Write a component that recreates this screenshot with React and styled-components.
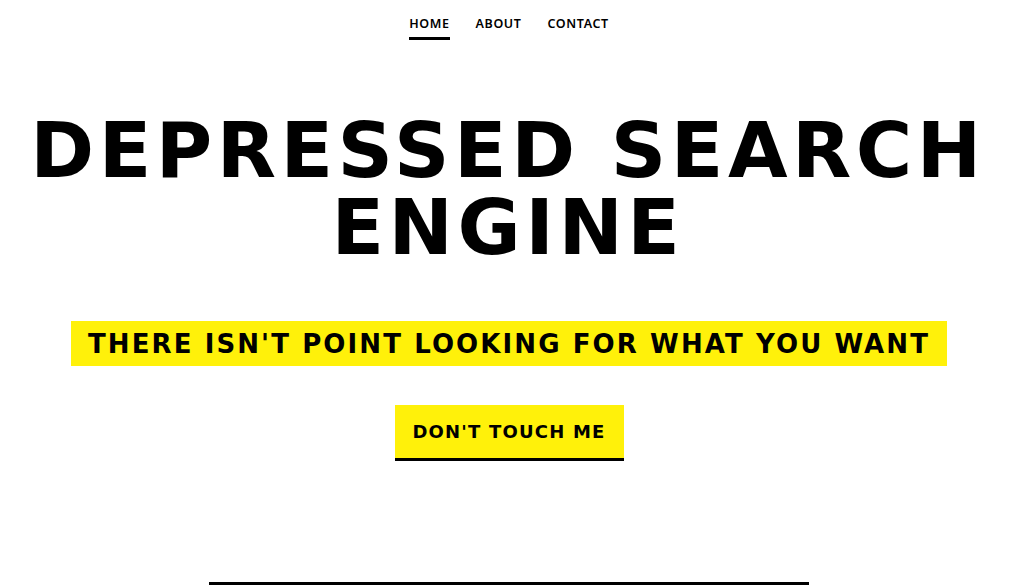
import React from 'react';
import styled, { createGlobalStyle } from 'styled-components';

const GlobalStyle = createGlobalStyle`
  html, body {
    margin: 0;
    padding: 0;
    background: #ffffff;
  }
  body {
    font-family: "DejaVu Sans", "Liberation Sans", sans-serif;
    color: #000000;
  }
`;

const Page = styled.div`
  width: 1024px;
  min-height: 586px;
  display: flex;
  flex-direction: column;
  align-items: center;
  & > * {
    flex-shrink: 0;
  }
`;

const Nav = styled.nav`
  display: flex;
  gap: 26px;
  margin-top: 15px;
  margin-left: -6px;
`;

const NavLink = styled.a`
  font-family: "Noto Sans", "Open Sans", sans-serif;
  font-size: 12.5px;
  font-weight: 600;
  letter-spacing: 0.6px;
  color: #000;
  text-decoration: none;
  padding-bottom: 5px;
  border-bottom: 3px solid ${(props) => (props.$active ? '#000' : 'transparent')};
`;

const Titulo = styled.h1`
  margin: 72px 0 0 -8px;
  font-size: 77px;
  line-height: 77px;
  font-weight: 700;
  letter-spacing: 4.5px;
  white-space: nowrap;
  text-align: center;
  text-transform: uppercase;
`;

const Lema = styled.div`
  margin: 55px 0 0 -6px;
  background: #fff10a;
  padding: 0 17px;
  height: 45px;
  display: flex;
  align-items: center;
  font-size: 26px;
  font-weight: 700;
  letter-spacing: 2.1px;
  white-space: nowrap;
`;

const Boton = styled.button`
  margin: 39px 0 0 -6px;
  background: #fff10a;
  border: none;
  border-bottom: 3px solid #000;
  width: 229px;
  height: 56px;
  font-family: inherit;
  font-size: 18px;
  font-weight: 700;
  letter-spacing: 1.2px;
  color: #000;
  cursor: pointer;
`;

const Linea = styled.hr`
  margin: 121px 0 0 -6px;
  width: 600px;
  border: none;
  border-top: 3px solid #000;
`;

const App = () => {
  return (
    <Page>
      <GlobalStyle />
      <Nav>
        <NavLink href="#" $active>HOME</NavLink>
        <NavLink href="#">ABOUT</NavLink>
        <NavLink href="#">CONTACT</NavLink>
      </Nav>
      <Titulo>
        Depressed Search
        <br />
        Engine
      </Titulo>
      <Lema>THERE ISN'T POINT LOOKING FOR WHAT YOU WANT</Lema>
      <Boton>DON'T TOUCH ME</Boton>
      <Linea />
    </Page>
  );
};

export default App;
